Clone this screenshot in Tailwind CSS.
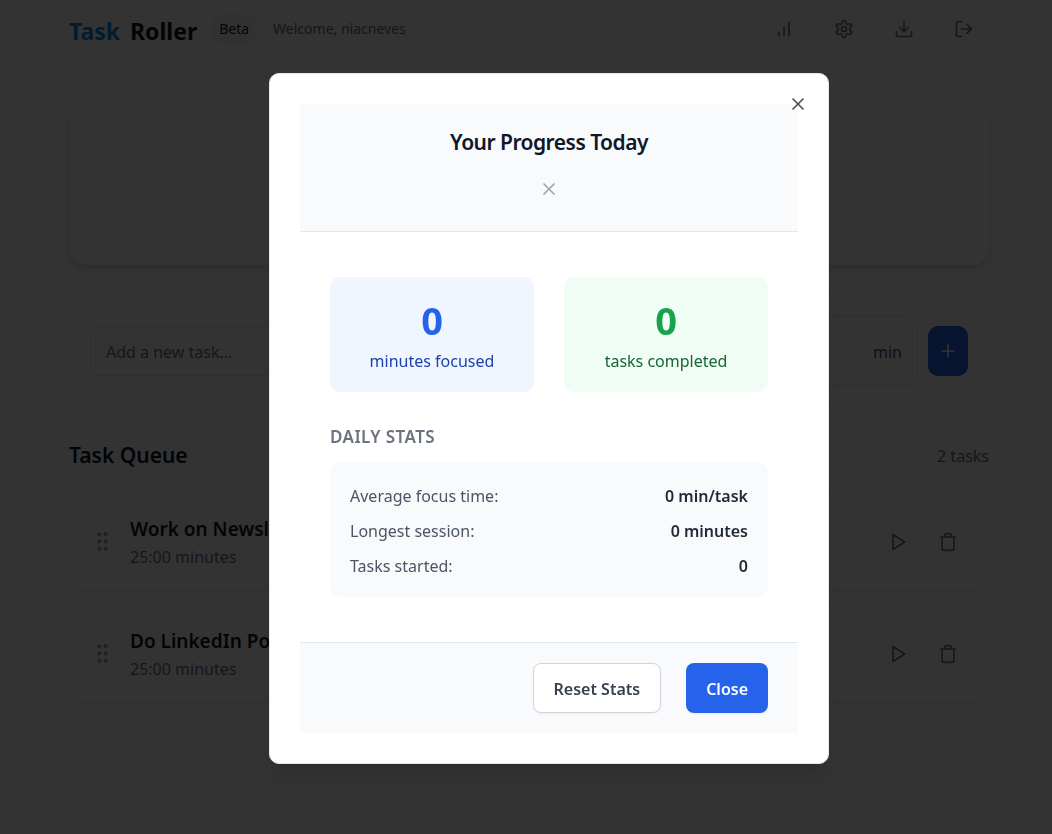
<!DOCTYPE html>
<html lang="en">
<head>
  <meta charset="UTF-8">
  <meta name="viewport" content="width=device-width, initial-scale=1.0">
  <title>Task Roller</title>
  <script src="https://cdn.jsdelivr.net/npm/@tailwindcss/browser@4"></script>
</head>
<body class="min-h-screen overflow-hidden bg-[#fcfcfd] font-['Noto_Sans','Open_Sans',sans-serif] text-base text-[#0f172a]">
  <!-- Header -->
  <header class="border-b border-[#f0f0f2] pt-1 pb-5 pl-[69px] pr-[63px]">
    <div class="flex items-center justify-between">
      <div class="flex items-center">
        <h1 class="flex gap-[10px] pt-1 text-[23px] font-bold"><span class="text-[#0c8ce9]">Task</span><span>Roller</span></h1>
        <span class="ml-[13px] rounded-full bg-[#f6f6f8] px-[9px] py-[5px] text-sm">Beta</span>
        <span class="ml-[15px] text-sm text-[#6b7280]">Welcome, niacneves</span>
      </div>
      <nav class="flex gap-[10px] text-[#6b7280]">
        <button type="button" aria-label="Stats" class="flex h-[50px] w-[50px] items-center justify-center">
          <svg class="h-5 w-5" viewBox="0 0 24 24" fill="none" stroke="currentColor" stroke-width="2" stroke-linecap="round" stroke-linejoin="round"><path d="M12 20V10M18 20V4M6 20v-4"/></svg>
        </button>
        <button type="button" aria-label="Settings" class="flex h-[50px] w-[50px] items-center justify-center">
          <svg class="h-5 w-5" viewBox="0 0 24 24" fill="none" stroke="currentColor" stroke-width="2" stroke-linecap="round" stroke-linejoin="round"><path d="M12.22 2h-.44a2 2 0 0 0-2 2v.18a2 2 0 0 1-1 1.73l-.43.25a2 2 0 0 1-2 0l-.15-.08a2 2 0 0 0-2.73.73l-.22.38a2 2 0 0 0 .73 2.73l.15.1a2 2 0 0 1 1 1.72v.51a2 2 0 0 1-1 1.74l-.15.09a2 2 0 0 0-.73 2.73l.22.38a2 2 0 0 0 2.73.73l.15-.08a2 2 0 0 1 2 0l.43.25a2 2 0 0 1 1 1.73V20a2 2 0 0 0 2 2h.44a2 2 0 0 0 2-2v-.18a2 2 0 0 1 1-1.73l.43-.25a2 2 0 0 1 2 0l.15.08a2 2 0 0 0 2.73-.73l.22-.39a2 2 0 0 0-.73-2.73l-.15-.08a2 2 0 0 1-1-1.74v-.5a2 2 0 0 1 1-1.74l.15-.09a2 2 0 0 0 .73-2.73l-.22-.38a2 2 0 0 0-2.73-.73l-.15.08a2 2 0 0 1-2 0l-.43-.25a2 2 0 0 1-1-1.73V4a2 2 0 0 0-2-2z"/><circle cx="12" cy="12" r="3"/></svg>
        </button>
        <button type="button" aria-label="Download" class="flex h-[50px] w-[50px] items-center justify-center">
          <svg class="h-5 w-5" viewBox="0 0 24 24" fill="none" stroke="currentColor" stroke-width="2" stroke-linecap="round" stroke-linejoin="round"><path d="M21 15v4a2 2 0 0 1-2 2H5a2 2 0 0 1-2-2v-4M7 10l5 5 5-5M12 15V3"/></svg>
        </button>
        <button type="button" aria-label="Log out" class="flex h-[50px] w-[50px] items-center justify-center">
          <svg class="h-5 w-5" viewBox="0 0 24 24" fill="none" stroke="currentColor" stroke-width="2" stroke-linecap="round" stroke-linejoin="round"><path d="M9 21H5a2 2 0 0 1-2-2V5a2 2 0 0 1 2-2h4M16 17l5-5-5-5M21 12H9"/></svg>
        </button>
      </nav>
    </div>
  </header>

  <main class="pt-[30px] pl-[69px] pr-[63px]">
    <!-- Timer -->
    <section class="h-40 rounded-2xl bg-white shadow-md"></section>

    <!-- Add task -->
    <form class="mt-[30px] flex items-center gap-[10px] rounded-2xl border border-[#f3f4f6] bg-white p-5">
      <input type="text" aria-label="New task" placeholder="Add a new task..." class="h-[50px] min-w-0 flex-1 rounded-lg border border-[#e5e7eb] px-[15px] pt-0.5 placeholder:text-[#737373]">
      <div class="flex h-[70px] w-40 items-center justify-between rounded-[10px] border border-[#e5e7eb] px-[15px] pt-0.5">
        <input type="text" id="task-minutes" value="25" class="w-16">
        <label for="task-minutes" class="text-[#4b5563]">min</label>
      </div>
      <button type="button" aria-label="Add task" class="flex h-[50px] w-10 items-center justify-center rounded-[10px] bg-[#2563eb] text-white">
        <svg class="h-5 w-5" viewBox="0 0 24 24" fill="none" stroke="currentColor" stroke-width="2" stroke-linecap="round"><path d="M5 12h14M12 5v14"/></svg>
      </button>
    </form>

    <!-- Task queue -->
    <section class="mt-[30px]">
      <div class="mb-5 flex h-9 items-center justify-between pt-0.5">
        <h2 class="text-[21px] font-semibold">Task Queue</h2>
        <span class="text-[#6b7280]">2 tasks</span>
      </div>
      <ul class="space-y-[15px]">
        <li class="flex items-center rounded-[10px] border border-[#f3f4f6] bg-white p-5 shadow-xs">
          <svg class="mr-[15px] h-[25px] w-[25px] text-[#9ca3af]" viewBox="0 0 24 24" fill="currentColor"><circle cx="9" cy="5" r="2"/><circle cx="9" cy="12" r="2"/><circle cx="9" cy="19" r="2"/><circle cx="15" cy="5" r="2"/><circle cx="15" cy="12" r="2"/><circle cx="15" cy="19" r="2"/></svg>
          <div class="flex-1">
            <h3 class="text-[19px] leading-[30px] font-semibold">Work on Newsletter</h3>
            <p class="pt-0.5 leading-[23px] text-[#6b7280]">25:00 minutes</p>
          </div>
          <div class="flex gap-[10px] text-[#6b7280]">
            <button type="button" aria-label="Start task" class="flex h-10 w-10 items-center justify-center">
              <svg class="h-5 w-5" viewBox="0 0 24 24" fill="none" stroke="currentColor" stroke-width="2" stroke-linejoin="round"><path d="M6 3l14 9-14 9z"/></svg>
            </button>
            <button type="button" aria-label="Delete task" class="flex h-10 w-10 items-center justify-center">
              <svg class="h-5 w-5" viewBox="0 0 24 24" fill="none" stroke="currentColor" stroke-width="2" stroke-linecap="round" stroke-linejoin="round"><path d="M3 6h18M19 6v14c0 1-1 2-2 2H7c-1 0-2-1-2-2V6M8 6V4c0-1 1-2 2-2h4c1 0 2 1 2 2v2"/></svg>
            </button>
          </div>
        </li>
        <li class="flex items-center rounded-[10px] border border-[#f3f4f6] bg-white p-5 shadow-xs">
          <svg class="mr-[15px] h-[25px] w-[25px] text-[#9ca3af]" viewBox="0 0 24 24" fill="currentColor"><circle cx="9" cy="5" r="2"/><circle cx="9" cy="12" r="2"/><circle cx="9" cy="19" r="2"/><circle cx="15" cy="5" r="2"/><circle cx="15" cy="12" r="2"/><circle cx="15" cy="19" r="2"/></svg>
          <div class="flex-1">
            <h3 class="text-[19px] leading-[30px] font-semibold">Do LinkedIn Post</h3>
            <p class="pt-0.5 leading-[23px] text-[#6b7280]">25:00 minutes</p>
          </div>
          <div class="flex gap-[10px] text-[#6b7280]">
            <button type="button" aria-label="Start task" class="flex h-10 w-10 items-center justify-center">
              <svg class="h-5 w-5" viewBox="0 0 24 24" fill="none" stroke="currentColor" stroke-width="2" stroke-linejoin="round"><path d="M6 3l14 9-14 9z"/></svg>
            </button>
            <button type="button" aria-label="Delete task" class="flex h-10 w-10 items-center justify-center">
              <svg class="h-5 w-5" viewBox="0 0 24 24" fill="none" stroke="currentColor" stroke-width="2" stroke-linecap="round" stroke-linejoin="round"><path d="M3 6h18M19 6v14c0 1-1 2-2 2H7c-1 0-2-1-2-2V6M8 6V4c0-1 1-2 2-2h4c1 0 2 1 2 2v2"/></svg>
            </button>
          </div>
        </li>
      </ul>
    </section>
  </main>

  <!-- Progress dialog -->
  <div class="fixed inset-0 flex items-center justify-center bg-black/80 pt-[3px] pl-[46px]">
    <div role="dialog" aria-labelledby="progress-title" class="relative w-full max-w-[560px] rounded-[10px] border border-[#e2e8f0] bg-white p-[30px] shadow-xl">
      <button type="button" aria-label="Dismiss" class="absolute top-5 right-5 text-[#4d4d4d]">
        <svg class="h-5 w-5" viewBox="0 0 24 24" fill="none" stroke="currentColor" stroke-width="2" stroke-linecap="round"><path d="M18 6L6 18M6 6l12 12"/></svg>
      </button>

      <div class="flex flex-col items-center border-b border-[#e2e8f0] bg-[#f9fafc] pt-5 pb-8">
        <h2 id="progress-title" class="text-[21px] leading-9 font-semibold tracking-tight">Your Progress Today</h2>
        <button type="button" aria-label="Close progress" class="mt-[19px] text-[#9ca3af]">
          <svg class="h-5 w-5" viewBox="0 0 24 24" fill="none" stroke="currentColor" stroke-width="2" stroke-linecap="round"><path d="M18 6L6 18M6 6l12 12"/></svg>
        </button>
      </div>

      <div class="px-[30px] py-[45px]">
        <div class="grid grid-cols-2 gap-[30px] text-center">
          <div class="rounded-[10px] bg-[#eff6ff] py-[18px]">
            <div class="text-[38px] leading-[50px] font-bold text-[#2563eb]">0</div>
            <div class="mt-1 leading-[25px] text-[#1e40af]">minutes focused</div>
          </div>
          <div class="rounded-[10px] bg-[#f0fdf4] py-[18px]">
            <div class="text-[38px] leading-[50px] font-bold text-[#16a34a]">0</div>
            <div class="mt-1 leading-[25px] text-[#166534]">tasks completed</div>
          </div>
        </div>

        <h3 class="mt-8 text-[17px] leading-[25px] font-semibold tracking-wide text-[#6b7280] uppercase">Daily Stats</h3>
        <dl class="mt-[13px] space-y-[10px] rounded-[10px] bg-[#f9fafc] px-5 pt-[22px] pb-[18px] leading-[25px]">
          <div class="flex justify-between">
            <dt class="text-[#4b5563]">Average focus time:</dt>
            <dd class="font-semibold text-[#1f2937]">0 min/task</dd>
          </div>
          <div class="flex justify-between">
            <dt class="text-[#4b5563]">Longest session:</dt>
            <dd class="font-semibold text-[#1f2937]">0 minutes</dd>
          </div>
          <div class="flex justify-between">
            <dt class="text-[#4b5563]">Tasks started:</dt>
            <dd class="font-semibold text-[#1f2937]">0</dd>
          </div>
        </dl>
      </div>

      <div class="flex justify-end gap-[25px] border-t border-[#e2e8f0] bg-[#f9fafc] px-[30px] py-5">
        <button type="button" class="h-[50px] rounded-lg border border-[#d1d5db] bg-white px-5 pt-0.5 font-semibold text-[#374151] shadow-xs">Reset Stats</button>
        <button type="button" class="h-[50px] rounded-lg bg-[#2563eb] px-5 pt-0.5 font-semibold text-white shadow-xs">Close</button>
      </div>
    </div>
  </div>
</body>
</html>
